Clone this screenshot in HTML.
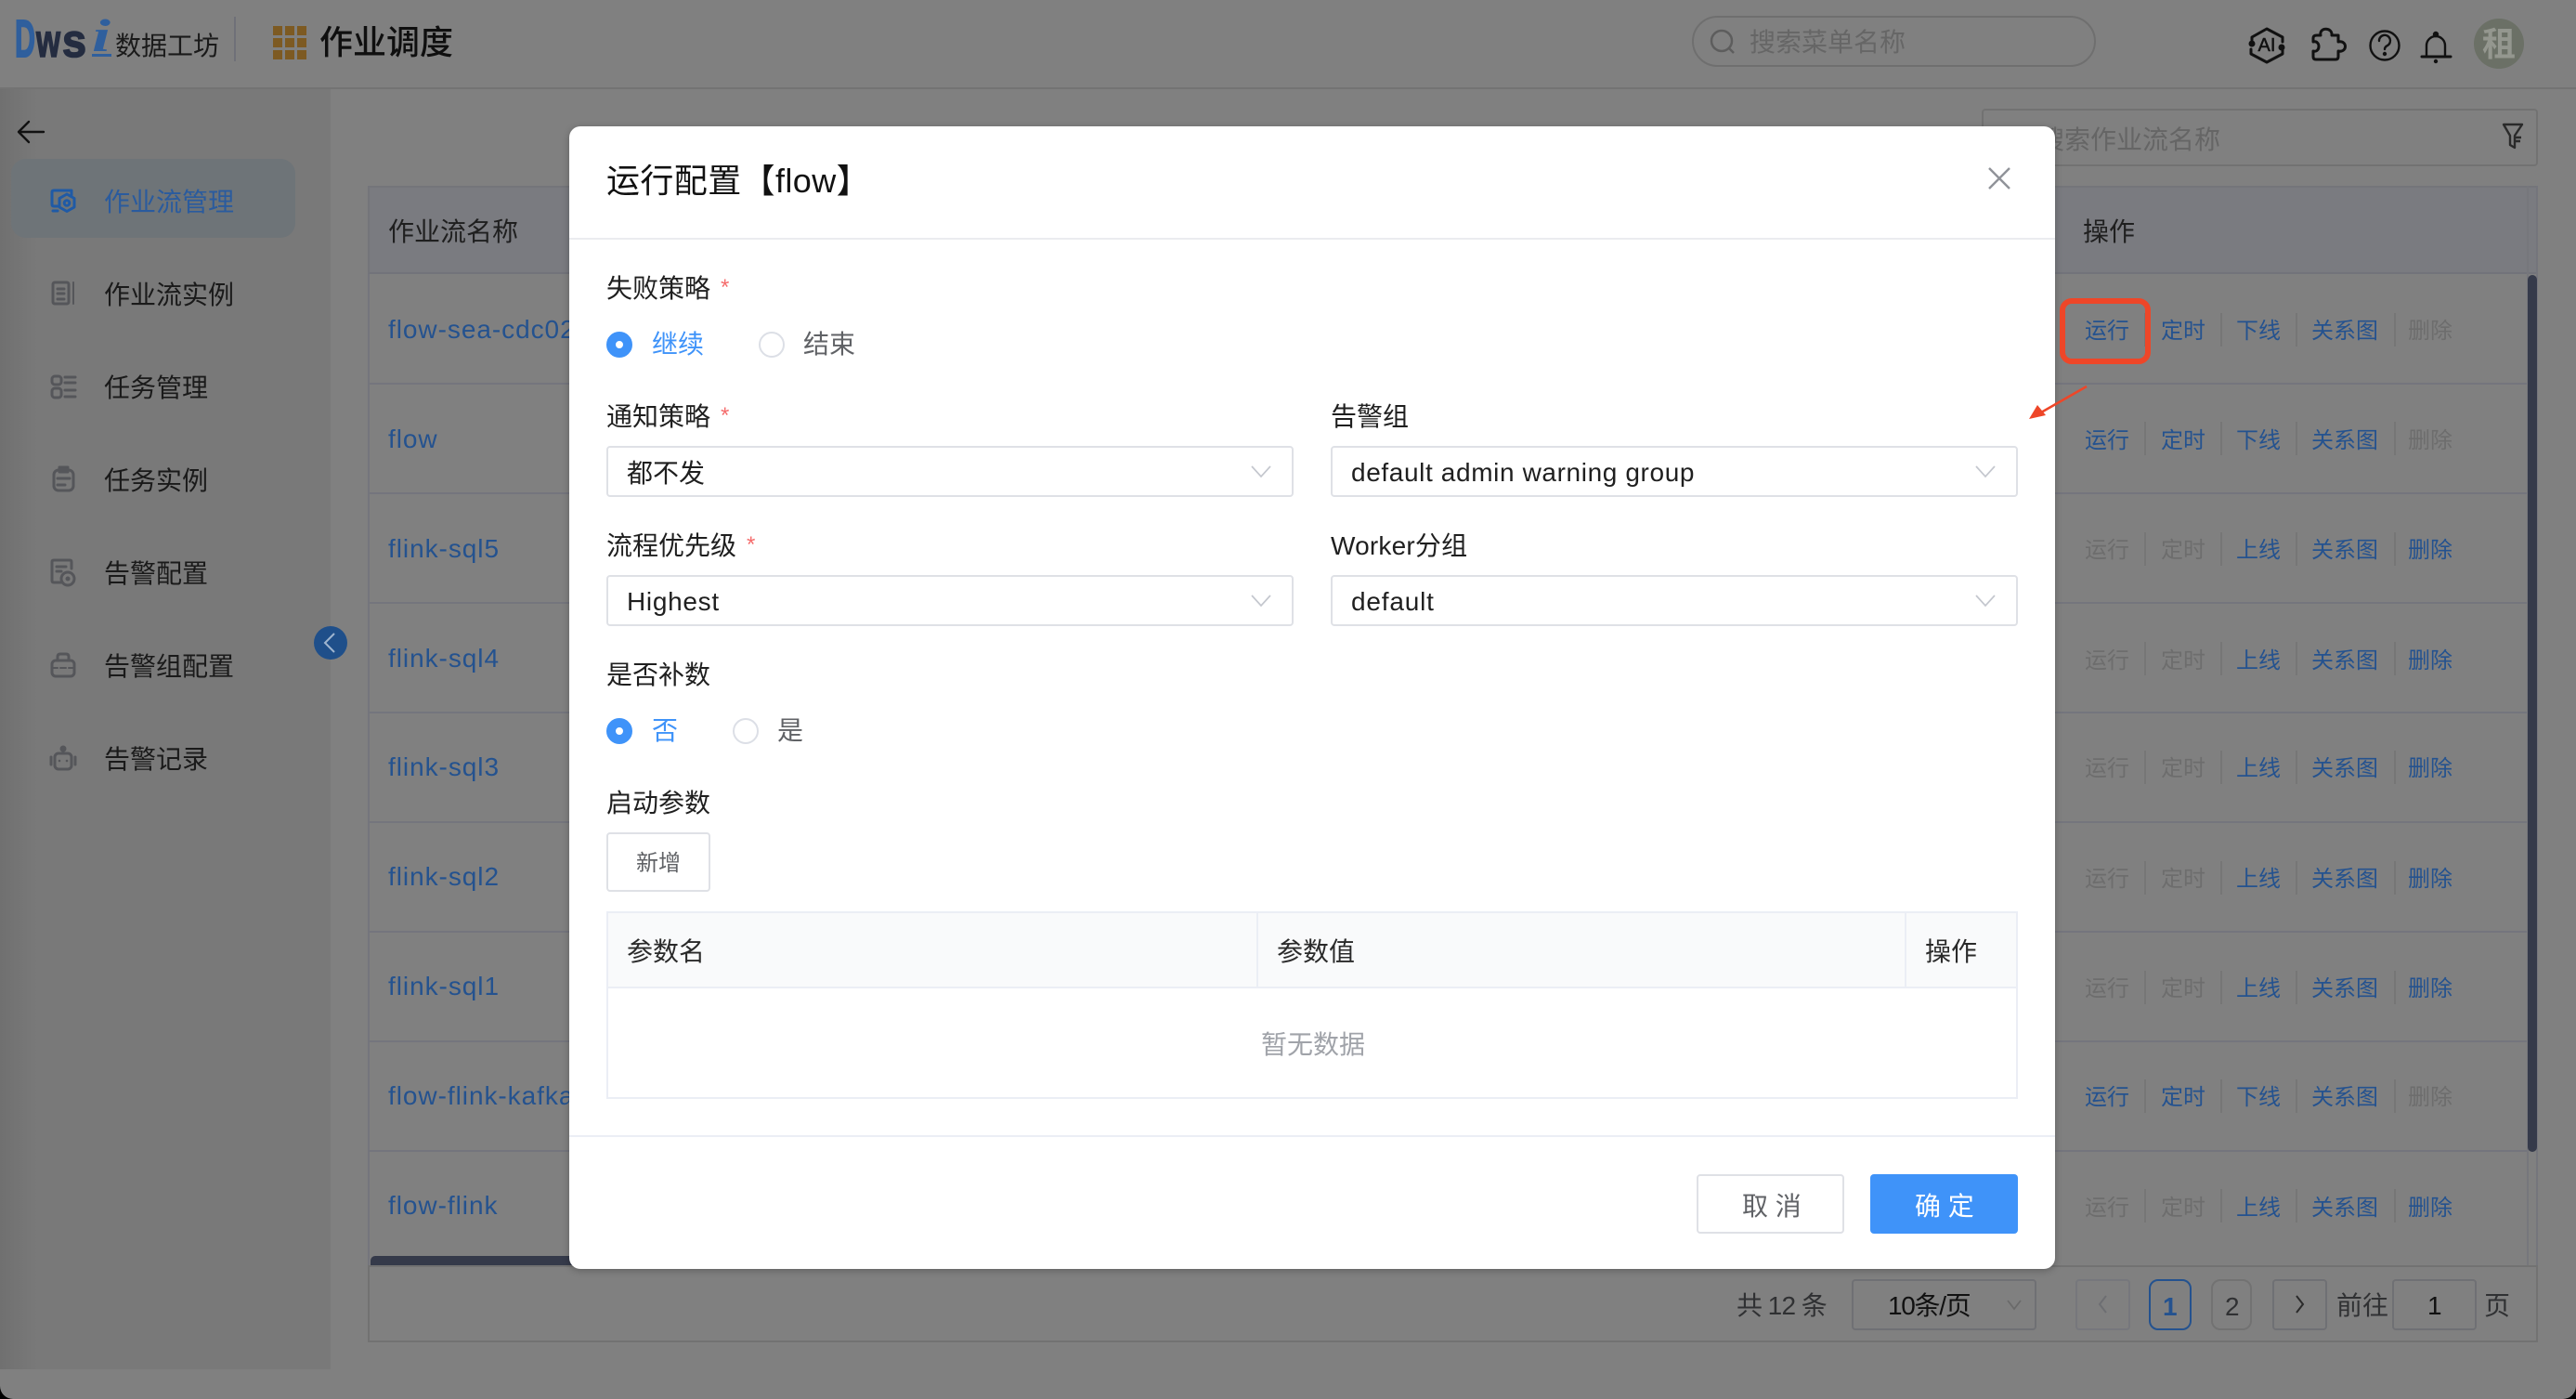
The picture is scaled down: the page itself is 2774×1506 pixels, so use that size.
<!DOCTYPE html>
<html lang="zh"><head><meta charset="utf-8"><title>作业调度</title>
<style>
*{box-sizing:border-box}
html,body{margin:0;padding:0;width:2774px;height:1506px;overflow:hidden;background:#000}
body{font-family:"Liberation Sans","Noto Sans CJK SC",sans-serif;font-size:28px;color:#1a1a1a}
#page{position:absolute;left:0;top:0;width:2774px;height:1506px;background:#808080;overflow:hidden;border-radius:0 0 14px 14px}
.b{position:absolute}
.t{position:absolute;white-space:nowrap;line-height:1;margin-top:2px}
svg.o{position:absolute;left:0;top:0;width:2774px;height:1506px}
.l{color:#24528f;letter-spacing:.95px;left:418px;margin-top:0}
.op{font-size:24px}
.on{color:#24528f}.off{color:#6d6d6d}
.sep{position:absolute;width:2px;height:36px;background:#767676}
.rl{position:absolute;left:398px;width:2323px;height:2px;background:#74757d}
#modal{position:absolute;left:613px;top:136px;width:1600px;height:1230px;background:#fff;border-radius:12px;box-shadow:0 2px 8px rgba(0,0,0,.25)}
#modal .t{color:#1f1f1f}
.sel{position:absolute;border:2px solid #dfe1e6;border-radius:4px;background:#fff;height:55px;width:740px}
.star{color:#f56c6c!important}
.radio{position:absolute;width:28px;height:28px;border-radius:50%;border:2px solid #dcdfe6;background:#fff}
.radio.c{border:10px solid #3f93f9;background:#fff}
.pg{position:absolute;top:1377px;height:55px;border:2px solid #6f7074;border-radius:4px}
</style></head><body>
<div id="page">
<!-- header -->
<div class="b" style="left:0;top:94px;width:2774px;height:2px;background:#737373"></div>
<div class="b" style="left:252px;top:18px;width:2px;height:48px;background:#6f7078"></div>
<div class="t" style="left:124px;top:34px;font-size:28px;color:#1a1a1a;letter-spacing:0">数据工坊</div>
<div class="t" style="left:344px;top:26px;font-size:36px;font-weight:500;color:#0f0f0f">作业调度</div>
<div class="b" style="left:1822px;top:17px;width:435px;height:55px;border:2px solid #6f6f6f;border-radius:28px"></div>
<div class="t" style="left:1884px;top:30px;color:#666">搜索菜单名称</div>
<!-- sidebar -->
<div class="b" style="left:0;top:96px;width:356px;height:1378px;background:linear-gradient(90deg,#707070,#797979 40px)"></div>
<div class="b" style="left:12px;top:171px;width:306px;height:85px;border-radius:16px;background:#6e7478"></div>
<div class="t" style="left:112px;top:202px;color:#2a5b9e">作业流管理</div>
<div class="t" style="left:112px;top:302px">作业流实例</div>
<div class="t" style="left:112px;top:402px">任务管理</div>
<div class="t" style="left:112px;top:502px">任务实例</div>
<div class="t" style="left:112px;top:602px">告警配置</div>
<div class="t" style="left:112px;top:702px">告警组配置</div>
<div class="t" style="left:112px;top:802px">告警记录</div>
<!-- search box top right -->
<div class="b" style="left:2134px;top:117px;width:599px;height:62px;border:2px solid #727272;border-radius:4px"></div>
<div class="t" style="left:2195px;top:135px;color:#656565">搜索作业流名称</div>
<!-- table -->
<div class="b" style="left:396px;top:200px;width:2337px;height:95px;background:#7a7b80;border:2px solid #74757a;border-bottom:2px solid #72737a"></div>
<div class="b" style="left:396px;top:295px;width:2px;height:1067px;background:#74757c"></div>
<div class="b" style="left:2721px;top:200px;width:2px;height:1162px;background:#76777c"></div>
<div class="b" style="left:2731px;top:200px;width:2px;height:1162px;background:#74757c"></div>
<div class="t" style="left:418px;top:234px;color:#1f1f1f">作业流名称</div>
<div class="t" style="left:2243px;top:234px;color:#1f1f1f">操作</div>
<div class="rl" style="top:412px"></div><div class="rl" style="top:530px"></div><div class="rl" style="top:648px"></div><div class="rl" style="top:766px"></div><div class="rl" style="top:884px"></div><div class="rl" style="top:1002px"></div><div class="rl" style="top:1120px"></div><div class="rl" style="top:1238px"></div>
<div class="t l" style="top:341px">flow-sea-cdc02</div>
<div class="t l" style="top:459px">flow</div>
<div class="t l" style="top:577px">flink-sql5</div>
<div class="t l" style="top:695px">flink-sql4</div>
<div class="t l" style="top:812px">flink-sql3</div>
<div class="t l" style="top:930px">flink-sql2</div>
<div class="t l" style="top:1048px">flink-sql1</div>
<div class="t l" style="top:1166px">flow-flink-kafka</div>
<div class="t l" style="top:1284px">flow-flink</div>

<!-- ops row 1 -->
<div class="t op on" style="left:2245px;top:343px">运行</div><div class="t op on" style="left:2327px;top:343px">定时</div><div class="t op on" style="left:2408px;top:343px">下线</div><div class="t op on" style="left:2489px;top:343px">关系图</div><div class="t op off" style="left:2593px;top:343px">删除</div>
<div class="sep" style="left:2309px;top:337px"></div><div class="sep" style="left:2391px;top:337px"></div><div class="sep" style="left:2472px;top:337px"></div><div class="sep" style="left:2578px;top:337px"></div>
<!-- row 2 -->
<div class="t op on" style="left:2245px;top:461px">运行</div><div class="t op on" style="left:2327px;top:461px">定时</div><div class="t op on" style="left:2408px;top:461px">下线</div><div class="t op on" style="left:2489px;top:461px">关系图</div><div class="t op off" style="left:2593px;top:461px">删除</div>
<div class="sep" style="left:2309px;top:454px"></div><div class="sep" style="left:2391px;top:454px"></div><div class="sep" style="left:2472px;top:454px"></div><div class="sep" style="left:2578px;top:454px"></div>
<!-- row 3 -->
<div class="t op off" style="left:2245px;top:579px">运行</div><div class="t op off" style="left:2327px;top:579px">定时</div><div class="t op on" style="left:2408px;top:579px">上线</div><div class="t op on" style="left:2489px;top:579px">关系图</div><div class="t op on" style="left:2593px;top:579px">删除</div>
<div class="sep" style="left:2309px;top:573px"></div><div class="sep" style="left:2391px;top:573px"></div><div class="sep" style="left:2472px;top:573px"></div><div class="sep" style="left:2578px;top:573px"></div>
<!-- row 4 -->
<div class="t op off" style="left:2245px;top:698px">运行</div><div class="t op off" style="left:2327px;top:698px">定时</div><div class="t op on" style="left:2408px;top:698px">上线</div><div class="t op on" style="left:2489px;top:698px">关系图</div><div class="t op on" style="left:2593px;top:698px">删除</div>
<div class="sep" style="left:2309px;top:691px"></div><div class="sep" style="left:2391px;top:691px"></div><div class="sep" style="left:2472px;top:691px"></div><div class="sep" style="left:2578px;top:691px"></div>
<!-- row 5 -->
<div class="t op off" style="left:2245px;top:814px">运行</div><div class="t op off" style="left:2327px;top:814px">定时</div><div class="t op on" style="left:2408px;top:814px">上线</div><div class="t op on" style="left:2489px;top:814px">关系图</div><div class="t op on" style="left:2593px;top:814px">删除</div>
<div class="sep" style="left:2309px;top:808px"></div><div class="sep" style="left:2391px;top:808px"></div><div class="sep" style="left:2472px;top:808px"></div><div class="sep" style="left:2578px;top:808px"></div>
<!-- row 6 -->
<div class="t op off" style="left:2245px;top:933px">运行</div><div class="t op off" style="left:2327px;top:933px">定时</div><div class="t op on" style="left:2408px;top:933px">上线</div><div class="t op on" style="left:2489px;top:933px">关系图</div><div class="t op on" style="left:2593px;top:933px">删除</div>
<div class="sep" style="left:2309px;top:927px"></div><div class="sep" style="left:2391px;top:927px"></div><div class="sep" style="left:2472px;top:927px"></div><div class="sep" style="left:2578px;top:927px"></div>
<!-- row 7 -->
<div class="t op off" style="left:2245px;top:1051px">运行</div><div class="t op off" style="left:2327px;top:1051px">定时</div><div class="t op on" style="left:2408px;top:1051px">上线</div><div class="t op on" style="left:2489px;top:1051px">关系图</div><div class="t op on" style="left:2593px;top:1051px">删除</div>
<div class="sep" style="left:2309px;top:1045px"></div><div class="sep" style="left:2391px;top:1045px"></div><div class="sep" style="left:2472px;top:1045px"></div><div class="sep" style="left:2578px;top:1045px"></div>
<!-- row 8 -->
<div class="t op on" style="left:2245px;top:1168px">运行</div><div class="t op on" style="left:2327px;top:1168px">定时</div><div class="t op on" style="left:2408px;top:1168px">下线</div><div class="t op on" style="left:2489px;top:1168px">关系图</div><div class="t op off" style="left:2593px;top:1168px">删除</div>
<div class="sep" style="left:2309px;top:1162px"></div><div class="sep" style="left:2391px;top:1162px"></div><div class="sep" style="left:2472px;top:1162px"></div><div class="sep" style="left:2578px;top:1162px"></div>
<!-- row 9 -->
<div class="t op off" style="left:2245px;top:1287px">运行</div><div class="t op off" style="left:2327px;top:1287px">定时</div><div class="t op on" style="left:2408px;top:1287px">上线</div><div class="t op on" style="left:2489px;top:1287px">关系图</div><div class="t op on" style="left:2593px;top:1287px">删除</div>
<div class="sep" style="left:2309px;top:1280px"></div><div class="sep" style="left:2391px;top:1280px"></div><div class="sep" style="left:2472px;top:1280px"></div><div class="sep" style="left:2578px;top:1280px"></div>

<!-- scrollbars -->
<div class="b" style="left:2722px;top:296px;width:10px;height:944px;border-radius:5px;background:#353a4a"></div>
<div class="b" style="left:399px;top:1352px;width:1000px;height:10px;border-radius:5px 5px 0 0;background:#353a4a"></div>
<!-- pagination -->
<div class="b" style="left:396px;top:1362px;width:2337px;height:83px;border:2px solid #727272"></div>
<div class="t" style="left:1870px;top:1390px;color:#303133;word-spacing:-1px;letter-spacing:-.6px">共 12 条</div>
<div class="pg" style="left:1994px;width:199px"></div>
<div class="t" style="left:2033px;top:1390px;color:#111;letter-spacing:-1.3px">10条/页</div>
<div class="pg" style="left:2235px;width:59px;border-color:#76777c"></div>
<div class="pg" style="left:2314px;width:46px;border-color:#24528f;border-radius:10px"></div>
<div class="t" style="left:2329px;top:1391px;color:#24528f;font-weight:bold">1</div>
<div class="pg" style="left:2381px;width:44px;border-radius:10px;border-color:#727272"></div>
<div class="t" style="left:2396px;top:1391px;color:#303133">2</div>
<div class="pg" style="left:2447px;width:59px"></div>
<div class="t" style="left:2516px;top:1390px;color:#303133">前往</div>
<div class="pg" style="left:2576px;width:91px"></div>
<div class="t" style="left:2614px;top:1390px;color:#111">1</div>
<div class="t" style="left:2675px;top:1390px;color:#303133">页</div>

<!-- bg icons -->
<svg class="o" viewBox="0 0 2774 1506" fill="none">
<!-- logo -->
<g font-family="Liberation Sans,sans-serif" font-weight="bold">
<text x="16" y="61" font-size="57" fill="#2f5f9d" stroke="#2f5f9d" stroke-width="2" textLength="22" lengthAdjust="spacingAndGlyphs">D</text>
<text x="39" y="61" font-size="50" fill="#242c40" stroke="#242c40" stroke-width="1.6" textLength="26" lengthAdjust="spacingAndGlyphs">w</text>
<text x="67" y="61" font-size="50" fill="#242c40" stroke="#242c40" stroke-width="1.6" textLength="26" lengthAdjust="spacingAndGlyphs">s</text>
</g>
<text x="99" y="55" font-family="Liberation Serif,serif" font-style="italic" font-weight="bold" font-size="50" fill="#2f5f9d" textLength="20" lengthAdjust="spacingAndGlyphs">i</text>
<rect x="99" y="58" width="21" height="3" fill="#2f5f9d"/>
<!-- grid icon -->
<g fill="#7d5a22">
<rect x="294" y="28" width="10" height="10"/><rect x="307" y="28" width="10" height="10"/><rect x="320" y="28" width="10" height="10"/>
<rect x="294" y="41" width="10" height="10"/><rect x="307" y="41" width="10" height="10"/><rect x="320" y="41" width="10" height="10"/>
<rect x="294" y="54" width="10" height="10"/><rect x="307" y="54" width="10" height="10"/><rect x="320" y="54" width="10" height="10"/>
</g>
<!-- search -->
<g stroke="#5d5d5d" stroke-width="2.5"><circle cx="1854" cy="44" r="11"/><path d="M1862 52l5 5"/></g>
<!-- AI -->
<g stroke="#111" stroke-width="3" stroke-linejoin="round" stroke-linecap="round">
<path d="M2425 43V40L2441 31L2458 40V45"/><path d="M2458 54V58L2441 67L2424 58V53"/>
<circle cx="2425" cy="47" r="2" fill="#111"/><circle cx="2457" cy="51" r="2" fill="#111"/>
<!-- puzzle -->
<path d="M2495 38H2499C2497 29 2512 29 2511 38H2518V45C2528 43 2528 57 2518 55V61Q2518 64 2515 64H2494Q2491 64 2491 61V55C2499 57 2499 43 2491 45V41Q2491 38 2495 38Z"/>
</g>
<text x="2441" y="55" text-anchor="middle" font-family="Liberation Sans,sans-serif" font-size="20" fill="#111" stroke="#111" stroke-width=".5">AI</text>
<!-- help -->
<g stroke="#111" stroke-width="2.4" stroke-linecap="round">
<circle cx="2568" cy="49" r="15.5"/>
<path d="M2562 44a6 6 0 1 1 9 5c-2 1-3 2-3 4"/><circle cx="2568" cy="58" r="1" fill="#111"/>
<!-- bell -->
<path d="M2613 60V49a10 10 0 0 1 20 0V60"/><path d="M2608 61H2639" stroke-width="3"/><circle cx="2623" cy="37" r="2" fill="#111"/><circle cx="2623" cy="66" r="1" fill="#111"/>
</g>
<circle cx="2691" cy="47" r="27" fill="#6b7066"/>
<text x="2691" y="60" text-anchor="middle" font-family="Noto Sans CJK SC,sans-serif" font-weight="bold" font-size="36" fill="#94978f">租</text>
<!-- funnel -->
<path d="M2696 134H2716L2708 146V159L2703 156V146Z M2709 148h6M2709 152h5" stroke="#2a2a2a" stroke-width="2.4" stroke-linejoin="round"/>
<!-- back arrow -->
<path d="M47 142H20M31 131L20 142L31 153" stroke="#111" stroke-width="2.4" stroke-linecap="round" stroke-linejoin="round"/>
<!-- collapse -->
<circle cx="356" cy="692" r="18" fill="#1f4f8a"/>
<path d="M360 682L350 692L360 702" stroke="#9fb5cf" stroke-width="2"/>
<!-- sidebar icons -->
<g stroke="#1f5aa6" stroke-width="3" stroke-linecap="round" stroke-linejoin="round">
<path d="M62 222H58Q56 222 56 220V207Q56 205 58 205H77V210"/><path d="M57 227H62"/>
<path d="M72 209L80 213.5V223L72 227.5L64 223V213.5Z"/><circle cx="72" cy="218.5" r="2.8"/>
</g>
<g stroke="#55565a" stroke-width="3" stroke-linecap="round" stroke-linejoin="round">
<rect x="57" y="304" width="17" height="23" rx="2"/><path d="M62 311H69M62 316H69M62 322H69"/><path d="M79 304V327" stroke-width="2"/>
<rect x="56" y="405" width="10" height="9" rx="3"/><rect x="56" y="418" width="10" height="10" rx="3"/><path d="M70 406H81M70 412H81M70 420H81M70 427H81"/>
<rect x="58" y="506" width="21" height="22" rx="5"/><rect x="64" y="503" width="9" height="5" fill="#55565a"/><path d="M62 515H75M62 522H70"/>
<path d="M66 627H58Q56 627 56 625V605Q56 603 58 603H75Q77 603 77 605V612"/><path d="M61 610H71M61 615H66"/><circle cx="73" cy="623" r="7"/><circle cx="73" cy="623" r="2" fill="#55565a" stroke-width="1"/>
<rect x="56" y="711" width="24" height="17" rx="4"/><path d="M62 711V707Q62 704 65 704H71Q74 704 74 707V711"/><path d="M56 719H62M65 719H71M74 719H80" stroke-width="2"/>
<rect x="59" y="811" width="18" height="17" rx="4"/><path d="M68 811V807"/><circle cx="68" cy="806" r="2" fill="#55565a"/><path d="M55 815V823M81 815V823"/><circle cx="64" cy="819" r=".8" fill="#55565a" stroke-width="1"/><circle cx="72" cy="819" r=".8" fill="#55565a" stroke-width="1"/>
</g>
<!-- pagination chevrons -->
<path d="M2162 1400L2169 1409L2176 1400" stroke="#6a6a6a" stroke-width="1.8"/>
<path d="M2268 1395L2261 1404L2268 1413" stroke="#6d6e72" stroke-width="2"/>
<path d="M2473 1395L2480 1404L2473 1413" stroke="#2a2a2a" stroke-width="2"/>
</svg>

<!-- modal -->
<div id="modal"></div>
<div class="t" style="left:653px;top:175px;font-size:36px;color:#111;letter-spacing:.4px">运行配置【flow】</div>
<div class="b" style="left:613px;top:256px;width:1600px;height:2px;background:#ebecef"></div>
<div class="t" style="left:653px;top:295px;color:#1f1f1f">失败策略</div><div class="t star" style="left:776px;top:296px;font-size:24px">*</div>
<div class="radio c" style="left:653px;top:357px"></div>
<div class="t" style="left:702px;top:357px;color:#3f93f9;margin-top:0">继续</div>
<div class="radio" style="left:817px;top:357px"></div>
<div class="t" style="left:865px;top:357px;color:#606266;margin-top:0">结束</div>

<div class="t" style="left:653px;top:433px;color:#1f1f1f">通知策略</div><div class="t star" style="left:776px;top:434px;font-size:24px">*</div>
<div class="sel" style="left:653px;top:480px"></div>
<div class="t" style="left:675px;top:494px;color:#1f1f1f">都不发</div>
<div class="t" style="left:1433px;top:433px;color:#1f1f1f">告警组</div>
<div class="sel" style="left:1433px;top:480px"></div>
<div class="t" style="left:1455px;top:493px;color:#1f1f1f;letter-spacing:.62px">default admin warning group</div>

<div class="t" style="left:653px;top:572px;color:#1f1f1f">流程优先级</div><div class="t star" style="left:804px;top:573px;font-size:24px">*</div>
<div class="sel" style="left:653px;top:619px"></div>
<div class="t" style="left:675px;top:632px;color:#1f1f1f;letter-spacing:.7px">Highest</div>
<div class="t" style="left:1433px;top:572px;color:#1f1f1f;letter-spacing:.2px">Worker分组</div>
<div class="sel" style="left:1433px;top:619px"></div>
<div class="t" style="left:1455px;top:632px;color:#1f1f1f;letter-spacing:.8px">default</div>

<div class="t" style="left:653px;top:711px;color:#1f1f1f">是否补数</div>
<div class="radio c" style="left:653px;top:773px"></div>
<div class="t" style="left:702px;top:773px;color:#3f93f9;margin-top:0">否</div>
<div class="radio" style="left:789px;top:773px"></div>
<div class="t" style="left:837px;top:773px;color:#606266;margin-top:0">是</div>

<div class="t" style="left:653px;top:849px;color:#1f1f1f">启动参数</div>
<div class="b" style="left:653px;top:896px;width:112px;height:64px;border:2px solid #dfe1e6;border-radius:4px;background:#fff"></div>
<div class="t" style="left:685px;top:916px;font-size:24px;color:#606266">新增</div>

<div class="b" style="left:653px;top:981px;width:1520px;height:202px;border:2px solid #ebeef5;background:#fff"></div>
<div class="b" style="left:655px;top:983px;width:1516px;height:79px;background:#f9fafb"></div>
<div class="b" style="left:655px;top:1062px;width:1516px;height:2px;background:#ebeef5"></div>
<div class="b" style="left:1353px;top:983px;width:2px;height:79px;background:#ebeef5"></div>
<div class="b" style="left:2051px;top:983px;width:2px;height:79px;background:#ebeef5"></div>
<div class="t" style="left:675px;top:1009px;color:#2a2a2a">参数名</div>
<div class="t" style="left:1375px;top:1009px;color:#2a2a2a">参数值</div>
<div class="t" style="left:2073px;top:1009px;color:#2a2a2a">操作</div>
<div class="t" style="left:1358px;top:1109px;color:#a0a3a9">暂无数据</div>

<div class="b" style="left:613px;top:1222px;width:1600px;height:2px;background:#ebeef5"></div>
<div class="b" style="left:1827px;top:1264px;width:159px;height:64px;border:2px solid #dfe1e6;border-radius:4px;background:#fff"></div>
<div class="t" style="left:1876px;top:1283px;color:#606266">取 消</div>
<div class="b" style="left:2014px;top:1264px;width:159px;height:64px;border-radius:4px;background:#3f93f9"></div>
<div class="t" style="left:2062px;top:1283px;color:#fff">确 定</div>

<!-- top icons -->
<svg class="o" viewBox="0 0 2774 1506" fill="none">
<path d="M2142 181L2164 203M2164 181L2142 203" stroke="#909399" stroke-width="2.4"/>
<g stroke="#c4c7ce" stroke-width="1.7">
<path d="M1348 502L1358 513L1368 502"/><path d="M2128 502L2138 513L2148 502"/>
<path d="M1348 641L1358 652L1368 641"/><path d="M2128 641L2138 652L2148 641"/>
</g>
<!-- red highlight -->
<rect x="2221" y="324" width="92" height="65" rx="10" stroke="#ee4628" stroke-width="6"/>
<path d="M2247 416L2198 444" stroke="#ee4628" stroke-width="2.5"/>
<path d="M2185 451L2194 436L2203 447Z" fill="#ee4628"/>
</svg>
</div>
</body></html>
